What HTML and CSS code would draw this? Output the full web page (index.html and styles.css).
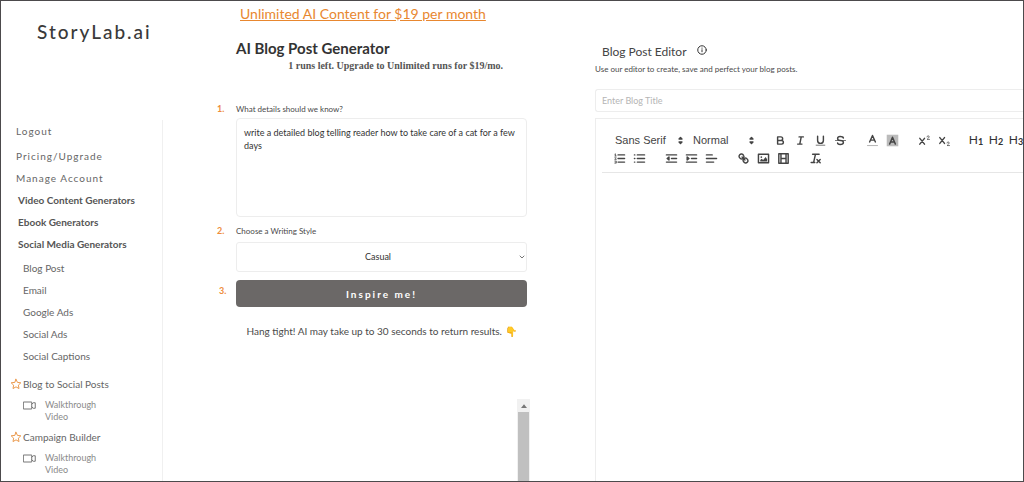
FILE: index.html
```html
<!DOCTYPE html>
<html lang="en">
<head>
<meta charset="utf-8">
<title>StoryLab.ai – AI Blog Post Generator</title>
<link rel="stylesheet" href="styles.css">
</head>
<body>
<div class="app">
  <aside class="sidebar">
    <div class="logo">StoryLab.ai</div>
    <nav class="nav">
      <a class="account first" href="#">Logout</a>
      <a class="account" href="#">Pricing/Upgrade</a>
      <a class="account" href="#">Manage Account</a>
      <a class="group" href="#">Video Content Generators</a>
      <a class="group" href="#">Ebook Generators</a>
      <a class="group" href="#">Social Media Generators</a>
      <div class="sub">
        <a href="#">Blog Post</a>
        <a href="#">Email</a>
        <a href="#">Google Ads</a>
        <a href="#">Social Ads</a>
        <a href="#">Social Captions</a>
      </div>
      <div class="featured">
        <a class="star-link" href="#"><svg class="star" viewBox="0 0 24 24"><path d="M12 2.5l2.9 6.3 6.8.8-5 4.7 1.3 6.8-6-3.4-6 3.4 1.3-6.8-5-4.7 6.8-.8z"/></svg>Blog to Social Posts</a>
        <a class="video" href="#"><svg class="cam" viewBox="0 0 26 18"><path d="M1.5 2h16v14h-16zM17.5 6.500l3-3h4v11h-4l-3-3"/></svg><span>Walkthrough Video</span></a>
      </div>
      <div class="featured">
        <a class="star-link" href="#"><svg class="star" viewBox="0 0 24 24"><path d="M12 2.5l2.9 6.3 6.8.8-5 4.7 1.3 6.8-6-3.4-6 3.4 1.3-6.8-5-4.7 6.8-.8z"/></svg>Campaign Builder</a>
        <a class="video" href="#"><svg class="cam" viewBox="0 0 26 18"><path d="M1.5 2h16v14h-16zM17.5 6.500l3-3h4v11h-4l-3-3"/></svg><span>Walkthrough Video</span></a>
      </div>
    </nav>
  </aside>

  <main class="generator">
    <a class="promo" href="#">Unlimited AI Content for $19 per month</a>
    <h1>AI Blog Post Generator</h1>
    <p class="runs">1 runs left. Upgrade to Unlimited runs for $19/mo.</p>
    <form class="form">
      <span class="num">1.</span>
      <label for="details">What details should we know?</label>
      <textarea id="details" spellcheck="false">write a detailed blog telling reader how to take care of a cat for a few days</textarea>
      <span class="num">2.</span>
      <label for="style">Choose a Writing Style</label>
      <div class="style-box">
        <select id="style"><option>Casual</option></select>
        <svg class="chev" viewBox="0 0 6 4"><path d="M1 1l2 2 2-2"/></svg>
      </div>
      <span class="num">3.</span>
      <button class="inspire" type="button">Inspire me!</button>
    </form>
    <p class="wait">Hang tight! AI may take up to 30 seconds to return results. <span class="emoji">👇</span></p>
    <div class="results">
      <div class="scroll"><div class="up"><svg viewBox="0 0 8 5"><path d="M0 5l4-5 4 5z"/></svg></div><div class="thumb"></div></div>
    </div>
  </main>

  <section class="editor">
    <h2>Blog Post Editor
      <svg class="info" viewBox="0 0 20 20"><circle cx="10" cy="10" r="8.5"/><path d="M10 9.5v4M10 6v.5"/></svg>
    </h2>
    <p class="hint">Use our editor to create, save and perfect your blog posts.</p>
    <input class="title" type="text" placeholder="Enter Blog Title" aria-label="Blog title">
    <div class="pad">
      <div class="toolbar">
        <div class="row">
          <div class="pick font"><select aria-label="Font"><option>Sans Serif</option></select><svg viewBox="0 0 18 18"><path class="fs" d="M7 11l2 2 2-2zM7 7l2-2 2 2z"/></svg></div>
          <div class="pick size"><select aria-label="Size"><option>Normal</option></select><svg viewBox="0 0 18 18"><path class="fs" d="M7 11l2 2 2-2zM7 7l2-2 2 2z"/></svg></div>
          <div class="set">
            <button aria-label="Bold"><svg viewBox="0 0 18 18"><path d="M5 4h4.500a2.500 2.500 0 0 1 0 5H5zM5 9h5.500a2.500 2.500 0 0 1 0 5H5z"/></svg></button>
            <button aria-label="Italic"><svg viewBox="0 0 18 18"><path d="M7 4h6M5 14h6M8 14l2-10"/></svg></button>
            <button aria-label="Underline"><svg viewBox="0 0 18 18"><path d="M5 3v6a4 4 0 0 0 8 0V3"/><path class="thin" d="M3 15.500h12"/></svg></button>
            <button aria-label="Strike"><svg viewBox="0 0 18 18"><path class="thin" d="M2 9h14"/><path d="M13 5.500C12.500 3.500 11 3.500 8.500 3.500S5 4.500 5 6.500 7 9 9 9s4 .5 4 2.700-2 2.800-4.500 2.800S5 14 5 12.500"/></svg></button>
          </div>
          <div class="set">
            <button aria-label="Text colour"><svg viewBox="0 0 18 18"><path class="soft" d="M2 16h14"/><path d="M5 11L9 2l4 9M6.500 8.500h5"/></svg></button>
            <button aria-label="Background"><svg viewBox="0 0 18 18"><path class="shade" d="M1 1h16v16H1z"/><path d="M5 14L9 4.500l4 9.500M6.500 11h5"/></svg></button>
          </div>
          <div class="set">
            <button aria-label="Superscript"><svg viewBox="0 0 18 18"><path d="M2.500 6l6.500 8M9 6l-6.500 8"/><path class="thin" d="M12.500 4q0-1.500 1.500-1.500T15.500 4q0 1-3 3.500h3.500"/></svg></button>
            <button aria-label="Subscript"><svg viewBox="0 0 18 18"><path d="M2.500 5l6.500 8M9 5l-6.500 8"/><path class="thin" d="M12.500 12.500q0-1.500 1.500-1.500t1.500 1.500q0 1-3 3.500h3.500"/></svg></button>
          </div>
          <div class="set">
            <button class="h">H<sub>1</sub></button>
            <button class="h">H<sub>2</sub></button>
            <button class="h">H<sub>3</sub></button>
          </div>
        </div>
        <div class="row">
          <div class="set">
            <button aria-label="Ordered list"><svg viewBox="0 0 18 18"><path d="M7 4h9M7 9h9M7 14h9"/><path class="thin" d="M2.500 5.500h2M3.500 5.500v-3l-1 .5M4.500 10.500h-2l2-2.500h-2M2.500 12.500h2v3h-2M3 14h1.500"/></svg></button>
            <button aria-label="Bullet list"><svg viewBox="0 0 18 18"><path d="M6 4h10M6 9h10M6 14h10M2 4h.5M2 9h.5M2 14h.5"/></svg></button>
          </div>
          <div class="set">
            <button aria-label="Outdent"><svg viewBox="0 0 18 18"><path d="M2 14h14M2 4h14M9 9h7M5.500 7v4L3 9z"/></svg></button>
            <button aria-label="Indent"><svg viewBox="0 0 18 18"><path d="M2 14h14M2 4h14M9 9h7M3 7v4l2.500-2z"/></svg></button>
            <button aria-label="Align"><svg viewBox="0 0 18 18"><path d="M2 9h14M2 14h10M2 4h8"/></svg></button>
          </div>
          <div class="set">
            <button aria-label="Link"><svg viewBox="0 0 18 18"><path d="M7 7l4 4M8.900 4.600a3.200 3.200 0 1 0-4.300 4.300c1.500 1.300 3.500.6 4.300-.5s1.200-2.500 0-3.800zM9.100 13.400a3.200 3.200 0 1 0 4.300-4.300c-1.500-1.300-3.500-.6-4.300.5s-1.200 2.500 0 3.800z"/></svg></button>
            <button aria-label="Image"><svg viewBox="0 0 18 18"><path d="M2 3h14v12H2z"/><circle class="dot" cx="6" cy="7" r="1.200"/><path class="dot" d="M4.500 13v-2l2-1.500L8.500 11 12 7l2 3v3z"/></svg></button>
            <button aria-label="Video"><svg viewBox="0 0 18 18"><path d="M2.500 2.500h13v13h-13zM5.500 3v12M12.500 3v12M5.500 9h7"/></svg></button>
          </div>
          <div class="set">
            <button aria-label="Clear formatting"><svg viewBox="0 0 18 18"><path d="M5 3h9M6.500 14L9 3M3 14.500h5M11 10.500l4.500 4.500M15.500 10.500L11 15"/></svg></button>
          </div>
        </div>
      </div>
      <div class="canvas" contenteditable="true" aria-label="Blog post"></div>
    </div>
  </section>
</div>
</body>
</html>
```
FILE: styles.css
```css
* { box-sizing: border-box; }
body { margin: 0; background: #fff; color: #4a4a4a; font-family: Lato, "Open Sans", sans-serif; font-size: 10px; }
a { color: inherit; text-decoration: none; }
h1, h2, p { margin: 0; }
svg { display: block; fill: none; stroke: #444; stroke-width: 2; stroke-linecap: round; stroke-linejoin: round; }

.app {
  height: 100vh;
  display: grid;
  grid-template-columns: 162px minmax(0, 1fr) minmax(0, 1fr);
  border: 1px solid #4c4a4c;
  overflow: hidden;
}

.sidebar { display: flex; flex-direction: column; }
.logo { height: 119px; padding: 18px 0 0 36px; font-size: 19px; line-height: 26px; font-weight: 500; letter-spacing: 2px; color: #3a3a3a; }
.nav { flex: 1; display: flex; flex-direction: column; border-right: 1px solid #f0f0f0; line-height: 22px; color: #666; }
.account { padding-left: 15px; letter-spacing: 1px; }
.account.first { margin-bottom: 3px; }
.group { padding-left: 17px; font-weight: bold; color: #555; }
.sub { display: flex; flex-direction: column; padding: 2px 0 6px 22px; }
.featured { padding-left: 9px; margin-bottom: 3px; }
.star-link { display: flex; align-items: center; gap: 1px; }
.star { width: 12px; height: 12px; stroke: #eb9a4e; }
.video { display: flex; gap: 9px; padding: 4px 40px 0 13px; font-size: 9px; line-height: 12px; color: #8a8a8a; }
.video span { width: 60px; }
.cam { width: 13px; height: 9px; margin-top: 2px; stroke: #777; }

.generator { display: flex; flex-direction: column; padding: 3px 66px 0 54px; min-width: 0; }
.promo { margin-left: 23px; font-size: 14px; line-height: 20px; color: #e8872f; text-decoration: underline; white-space: nowrap; }
h1 { margin: 14px 0 0 19px; font-size: 15px; line-height: 20px; color: #333; }
.runs { padding: 0 24px 0 0; font: bold 10px/16px "Liberation Serif", serif; text-align: right; color: #555; white-space: nowrap; }
.form { display: grid; grid-template-columns: 19px minmax(0, 1fr); margin-top: 27px; font-size: 8px; line-height: 16px; }
.num { font-size: 9px; font-weight: bold; color: #ee8d3c; }
textarea, .style-box, .inspire { grid-column: 2; font-family: inherit; font-size: 9px; }
textarea { height: 99px; margin: 1px 0 6px; padding: 7px; border: 1px solid #ededed; border-radius: 4px; resize: none; line-height: 13px; color: #333; background: #fff; }
.style-box { position: relative; height: 30px; margin: 3px 0 8px; border: 1px solid #ededed; border-radius: 3px; }
.style-box select { appearance: none; width: 100%; height: 100%; padding: 0 7px 0 0; border: 0; background: none; font: inherit; color: #333; text-align: center; text-align-last: center; }
.chev { position: absolute; right: 1px; top: 12px; width: 6px; height: 4px; stroke: #777; stroke-width: 1; pointer-events: none; }
.form .inspire { height: 27px; border: 0; border-radius: 4px; background: #6b6867; color: #fff; font-size: 10px; font-weight: bold; letter-spacing: 2px; }
.form .num:nth-of-type(3) { padding: 3px 0 0 2px; }
.wait { margin-top: 15px; padding-left: 19px; line-height: 18px; text-align: center; white-space: nowrap; }
.results { flex: 1; display: flex; justify-content: flex-end; margin: 59px -3px 0 0; }
.scroll { width: 13px; display: flex; flex-direction: column; background: #f1f1f1; }
.up { height: 13px; display: grid; place-items: center; }
.up svg { width: 6px; height: 4px; fill: #777; stroke: none; }
.thumb { flex: 1; margin: 0 1px; background: #c0c0c0; }

.editor { display: flex; flex-direction: column; min-width: 0; padding: 42px 0 0 2px; }
h2 { display: flex; gap: 10px; padding-left: 7px; font-size: 12px; line-height: 18px; font-weight: normal; color: #444; }
.info { width: 10px; height: 10px; margin-top: 2px; stroke: #333; }
.hint { margin-bottom: 11px; font-size: 8px; line-height: 17px; }
.title { width: 100%; height: 23px; padding: 0 6px; border: 1px solid #ededed; border-right: 0; border-radius: 3px 0 0 3px; font: 9px Lato, sans-serif; color: #333; }
.title::placeholder { color: #b5b5b5; }
.pad { flex: 1; display: flex; flex-direction: column; min-width: 0; margin-top: 6px; padding-left: 6px; border: 1px solid #ededed; border-width: 1px 0 0 1px; }
.toolbar { padding: 12px 0 5px 7px; border-bottom: 1px solid #e6e6e6; overflow: hidden; }
.row { display: flex; height: 18px; }
.set { display: flex; flex: none; margin-right: 12px; }
.set button { width: 20px; height: 18px; padding: 0; border: 0; background: none; display: grid; place-items: center; }
.set svg { width: 13px; height: 13px; }
svg .thin { stroke-width: 1; }
svg .soft { stroke: #999; stroke-width: 1; }
svg .shade { fill: #bbb; stroke: none; }
svg .fs { fill: #444; stroke: #444; }
svg .dot { fill: #444; stroke: none; }
.set .h { display: flex; align-items: center; justify-content: center; font: 12px/18px Lato, sans-serif; color: #333; }
.h sub { font-size: 9px; line-height: 9px; padding-top: 3px; vertical-align: baseline; font-weight: bold; }
.pick { flex: none; display: flex; align-items: center; padding-left: 6px; }
.pick select { appearance: none; flex: 1; min-width: 0; padding: 0; border: 0; background: none; font: 11px "Liberation Sans", Arial, sans-serif; color: #444; }
.pick svg { width: 13px; height: 13px; }
.font { width: 78px; }
.size { width: 83px; padding-right: 12px; }
.canvas { flex: 1; outline: 0; }
```
